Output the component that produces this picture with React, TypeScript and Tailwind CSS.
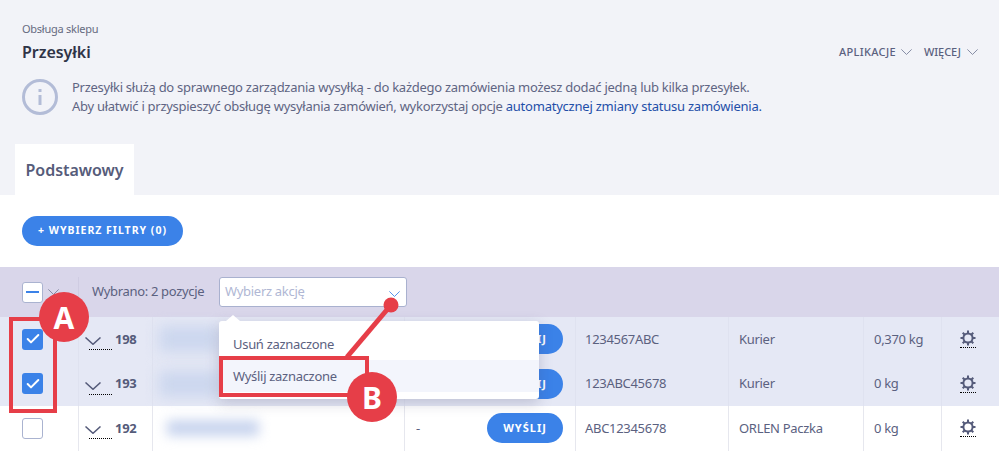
import React from 'react';
import { Check } from 'lucide-react';

const font = "font-['Noto_Sans','Liberation_Sans',sans-serif]";

interface Shipment {
  id: string;
  number: string;
  carrier: string;
  weight: string;
  selected: boolean;
  dash?: boolean;
}

const rows: Shipment[] = [
  { id: '198', number: '1234567ABC', carrier: 'Kurier', weight: '0,370 kg', selected: true },
  { id: '193', number: '123ABC45678', carrier: 'Kurier', weight: '0 kg', selected: true },
  { id: '192', number: 'ABC12345678', carrier: 'ORLEN Paczka', weight: '0 kg', selected: false, dash: true },
];

const Chevron: React.FC<{ className: string; strokeWidth?: number }> = ({ className, strokeWidth = 1.2 }) => (
  <svg viewBox="0 0 16 8" preserveAspectRatio="none" className={className} fill="none" stroke="currentColor" strokeWidth={strokeWidth}>
    <polyline points="0.5,0.5 8,7.300 15.500,0.500" />
  </svg>
);

const Gear: React.FC = () => (
  <span className="inline-flex border-b border-dotted border-black h-[18px]">
    <svg viewBox="0 0 16 16" className="w-4 h-4 text-[#555b7a]" fill="none" stroke="currentColor">
      <circle cx="8" cy="8" r="4.600" strokeWidth="2" />
      <path d="M8 0.500v3M8 12.500v3M0.500 8h3M12.500 8h3M2.700 2.700l2.100 2.100M11.200 11.200l2.100 2.100M2.700 13.300l2.100-2.100M11.200 4.800l2.100-2.100" strokeWidth="2" />
    </svg>
  </span>
);

const App: React.FC = () => {
  return (
    <div className={`${font} relative w-[999px] h-[461px] overflow-hidden bg-white text-[#5b617f]`}>
      {/* Header */}
      <div className="bg-[#f2f3f8] h-[195px] flex flex-col pl-[22px] pt-[22px]">
        <div className="text-[11px] leading-[14px] tracking-[-0.25px] text-[#666a80]">Obsługa sklepu</div>
        <div className="flex items-start justify-between pr-[21px] mt-[5px]">
          <h1 className="text-[16px] leading-[22px] font-semibold text-[#2f3447] tracking-[-0.05px]">Przesyłki</h1>
          <div className="flex items-center text-[11px] leading-[14px] font-medium text-[#5b617f] tracking-[-0.05px] mt-[4px]">
            <span className="tracking-[0.35px]">APLIKACJE</span>
            <Chevron className="w-[11px] h-[6px] ml-[5px] mr-[12px] text-[#777d99]" />
            <span>WIĘCEJ</span>
            <Chevron className="w-[11px] h-[6px] ml-[6px] text-[#777d99]" />
          </div>
        </div>
        <div className="flex items-center gap-[14px] mt-[15px]">
          <svg viewBox="0 0 36 36" className="w-[36px] h-[36px] text-[#b3bcd7]" fill="none" stroke="currentColor" strokeWidth="3">
            <circle cx="18" cy="18" r="16.500" />
            <path d="M18 16v10" />
            <path d="M18 10v3" />
          </svg>
          <p className="text-[13px] leading-[18.500px] tracking-[-0.27px] text-[#5f6583]">
            Przesyłki służą do sprawnego zarządzania wysyłką - do każdego zamówienia możesz dodać jedną lub kilka przesyłek.
            <br />
            Aby ułatwić i przyspieszyć obsługę wysyłania zamówień, wykorzystaj opcje{' '}
            <span className="text-[#1f4fa8] tracking-[-0.22px]">automatycznej zmiany statusu zamówienia.</span>
          </p>
        </div>
        {/* Tab */}
        <div className="mt-auto -ml-[7px] w-[119px] h-[51px] bg-white flex items-center justify-center">
          <span className="text-[16px] font-semibold text-[#565c7a] tracking-[-0.05px]">Podstawowy</span>
        </div>
      </div>

      {/* Filters */}
      <div className="h-[72px] flex items-center pl-[22px]">
        <button className="h-[30px] w-[161px] rounded-full bg-[#3b82e8] text-white text-[10.500px] font-bold tracking-[1px]">
          + WYBIERZ FILTRY (0)
        </button>
      </div>

      {/* Bulk actions bar */}
      <div className="h-[50px] bg-[#d9d6ea] flex items-center">
        <div className="w-[78px] flex items-center pl-[22px] gap-[5px]">
          <span className="w-[21px] h-[21px] rounded-[3px] bg-white border border-[#aab3d0] flex items-center justify-center">
            <span className="w-[13px] h-[2px] bg-[#3b82e8]" />
          </span>
          <Chevron className="w-[11px] h-[6px] text-[#777d99]" />
        </div>
        <div className="border-l border-[#cfcce2] h-[30px] pl-[13px] flex items-center w-[141px] text-[13px] tracking-[-0.33px] whitespace-nowrap">
          Wybrano: 2 pozycje
        </div>
        <div className="w-[188px] h-[30px] rounded-[3px] bg-white border border-[#a9b1cf] flex items-center justify-between pl-[5px] pr-[6px] text-[13px] tracking-[-0.3px] text-[#b0b7d4]">
          <span>Wybierz akcję</span>
          <Chevron className="w-[11px] h-[6px] text-[#3b82e8] mt-[3px]" />
        </div>
      </div>

      {/* Table */}
      <div>
        {rows.map((row) => (
          <div
            key={row.id}
            className={`grid grid-cols-[79px_74px_252px_171px_153px_135px_78px_57px] h-[44.500px] text-[13px] tracking-[-0.3px] divide-x ${row.selected ? 'bg-[#e5e8f5] divide-[#dfe2f0]' : 'bg-white divide-[#e6e7ee]'}`}
          >
            <div className="flex items-center pl-[22px]">
              {row.selected ? (
                <span className="w-[21px] h-[21px] rounded-[3px] bg-[#3b82e8] flex items-center justify-center">
                  <Check className="w-[16px] h-[16px] text-white" strokeWidth={3} />
                </span>
              ) : (
                <span className="w-[21px] h-[21px] rounded-[3px] bg-white border border-[#aab3d0]" />
              )}
            </div>
            <div className="flex items-center pl-[6px]">
              <span className="relative h-[20px] w-[28px] mt-[2px]">
                <Chevron className="absolute left-0 top-[7px] w-[16px] h-[8px] text-[#555b7a]" strokeWidth={1.500} />
                <span className="absolute left-[4px] bottom-0 w-[23px] border-b border-dotted border-black" />
              </span>
              <span className="font-bold text-[#555b7a] ml-[2px]">{row.id}</span>
            </div>
            <div className="flex items-center">
              {row.selected ? (
                <span className="ml-[6px] w-[60px] h-[26px] bg-[#ccd7ee] blur-[7px]" />
              ) : (
                <span className="ml-[14px] w-[92px] h-[16px] bg-[#c8d4ee] blur-[6px]" />
              )}
            </div>
            <div className="flex items-center justify-between pl-[11px] pr-[12px]">
              <span>{row.dash ? '-' : ''}</span>
              <button className="w-[76px] h-[30px] rounded-full bg-[#3b82e8] text-white text-[11px] font-bold tracking-[1px]">
                WYŚLIJ
              </button>
            </div>
            <div className="flex items-center pl-[9px]">{row.number}</div>
            <div className="flex items-center pl-[10px]">{row.carrier}</div>
            <div className="flex items-center pl-[10px]">{row.weight}</div>
            <div className="flex items-center pl-[18px]">
              <Gear />
            </div>
          </div>
        ))}
      </div>

      {/* Dropdown menu */}
      <div className="absolute left-[219px] top-[321px] w-[320px] h-[78px] bg-white rounded-[3px] shadow-[0_4px_14px_rgba(70,70,110,0.25)] text-[13px] tracking-[-0.3px] pt-[9px]">
        <span className="absolute -top-[6px] left-[7px] w-0 h-0 border-x-[7px] border-x-transparent border-b-[6px] border-b-white" />
        <div className="h-[30px] flex items-center pl-[14px]">Usuń zaznaczone</div>
        <div className="h-[32px] flex items-center pl-[14px] pt-[2px] bg-[#f3f5fc]">Wyślij zaznaczone</div>
      </div>

      {/* Annotations */}
      <div className="absolute left-[9px] top-[317px] w-[48px] h-[96px] border-[4px] border-[#e63e48]" />
      <div className="absolute left-[39px] top-[292px] w-[50px] h-[50px] rounded-full bg-[#e63e48] flex items-center justify-center text-white text-[30px] font-bold">A</div>
      <svg className="absolute left-0 top-0 w-[999px] h-[461px] pointer-events-none" viewBox="0 0 999 461">
        <line x1="391" y1="305" x2="347" y2="357" stroke="#e63e48" strokeWidth="5" />
        <circle cx="391" cy="305" r="7.500" fill="#e63e48" />
      </svg>
      <div className="absolute left-[219px] top-[356px] w-[150px] h-[41px] border-[4px] border-[#e63e48]" />
      <div className="absolute left-[347px] top-[372px] w-[50px] h-[50px] rounded-full bg-[#e63e48] flex items-center justify-center text-white text-[30px] font-bold">B</div>
    </div>
  );
};

export default App;
